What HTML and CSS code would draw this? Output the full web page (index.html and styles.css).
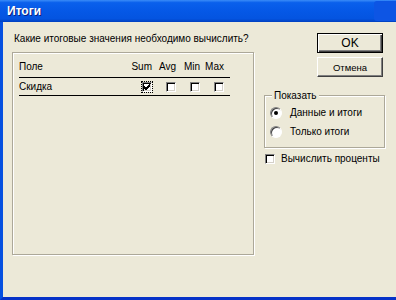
FILE: index.html
```html
<!DOCTYPE html>
<html lang="ru">
  <head>
    <meta charset="UTF-8" />
    <title>Итоги</title>
    <link rel="stylesheet" href="styles.css">
  </head>
  <body>
    <div class="window">
      <div class="titlebar">
        <span class="title">Итоги</span>
        <span class="corner"></span>
      </div>
      <div class="frame">
        <div class="left">
          <div class="prompt">Какие итоговые значения необходимо вычислить?</div>
          <div class="listbox">
            <div class="row head">
              <span>Поле</span>
              <span class="num">Sum</span>
              <span class="num">Avg</span>
              <span class="num">Min</span>
              <span class="num">Max</span>
            </div>
            <div class="row">
              <span>Скидка</span>
              <span class="num"><span class="check focus">
                <svg width="8" height="8" viewBox="0 0 8 8"><path d="M1 3 L3 5 L7 1 M1 4 L3 6 L7 2 M1 5 L3 7 L7 3" stroke="#000" stroke-width="1" fill="none"/></svg>
              </span></span>
              <span class="num"><span class="check"></span></span>
              <span class="num"><span class="check"></span></span>
              <span class="num"><span class="check"></span></span>
            </div>
          </div>
        </div>
        <div class="right">
          <div class="buttons">
            <button class="btn default">OK</button>
            <button class="btn">Отмена</button>
          </div>
          <div class="group">
            <span class="legend">Показать</span>
            <div class="option"><span class="radio on"></span>Данные и итоги</div>
            <div class="option"><span class="radio"></span>Только итоги</div>
          </div>
          <div class="option single"><span class="check"></span>Вычислить проценты</div>
        </div>
      </div>
    </div>
  </body>
</html>
```
FILE: styles.css
```css
body {
  margin: 0;
  overflow: hidden;
  font-family: "Liberation Sans", Arial, sans-serif;
  font-size: 10px;
  color: #000;
  background: #ece9d8;
  white-space: nowrap;
}

.window {
  width: 396px;
  height: 300px;
  display: flex;
  flex-direction: column;
}

/* заголовок окна */
.titlebar {
  height: 22px;
  display: flex;
  align-items: center;
  justify-content: space-between;
  background: linear-gradient(#3a8cf8 0%, #0a60ec 12%, #0558e6 50%, #0454e0 85%, #0040c0 100%);
}

.title {
  color: #fff;
  font-weight: bold;
  font-size: 12px;
  padding-left: 7px;
  text-shadow: 1px 1px #0a1e80;
}

.corner {
  width: 22px;
  height: 20px;
  background: #0d55e4;
  border-radius: 3px 0 0 3px;
}

.frame {
  flex: 1;
  display: flex;
  padding-top: 10px;
  border-left: 3px solid #0650e0;
  border-bottom: 3px solid #0632c8;
}

.left {
  margin-left: 9px;
  width: 242px;
}

.prompt {
  line-height: 13px;
  padding-left: 2px;
  margin-bottom: 7px;
}

.listbox {
  height: 198px;
  border: 1px solid #aca899;
  box-shadow: inset 1px 1px #fff, 1px 1px #fff;
  padding: 3px 0 0 6px;
}

.row {
  width: 206px;
  display: grid;
  grid-template-columns: 1fr 24px 24px 24px 24px;
  align-items: center;
  padding-right: 5px;
  border-bottom: 1px solid #000;
  height: 17px;
}

.row.head {
  height: 21px;
}

.num {
  display: flex;
  justify-content: flex-end;
  padding-right: 1px;
}

.check {
  width: 8px;
  height: 8px;
  background: #fff;
  border: 1px solid;
  border-color: #808080 #fff #fff #808080;
  box-shadow: inset 1px 1px #000, inset -1px -1px #d4d0c8;
  display: inline-flex;
  align-items: center;
  justify-content: center;
  flex: none;
}

.check.focus {
  outline: 1px dotted #000;
  outline-offset: 0;
}

.right {
  margin-left: 10px;
  width: 121px;
  padding-top: 1px;
}

.buttons {
  display: flex;
  flex-direction: column;
  gap: 4px;
  margin-left: 53px;
  width: 66px;
}

.btn {
  height: 20px;
  font-family: "Liberation Sans", Arial, sans-serif;
  font-size: 9.5px;
  color: #000;
  background: #ece9d8;
  border: 1px solid;
  border-color: #fff #404040 #404040 #fff;
  box-shadow: inset -1px -1px #808080;
  padding: 0;
}

.btn.default {
  border-color: #000;
  box-shadow: inset 1px 1px #fff, inset -1px -1px #404040, inset -2px -2px #808080;
  font-size: 12px;
}

.group {
  position: relative;
  margin-top: 18px;
  height: 44px;
  border: 1px solid #aca899;
  box-shadow: inset 1px 1px #fff, 1px 1px #fff;
  padding: 7px 0 0 5px;
}

.legend {
  position: absolute;
  top: -7px;
  left: 7px;
  padding: 0 2px;
  background: #ece9d8;
  line-height: 13px;
}

.option {
  display: flex;
  align-items: center;
  gap: 5px;
  height: 19px;
}

.option.single {
  margin-top: 4px;
  margin-left: 1px;
  height: 13px;
}

.option.single .check {
  margin-right: 1px;
}

.radio {
  width: 10px;
  height: 10px;
  border-radius: 50%;
  background: #fff;
  border: 1px solid;
  border-color: #808080 #fff #fff #808080;
  box-shadow: inset 1px 1px #404040;
  display: inline-flex;
  align-items: center;
  justify-content: center;
  margin-right: 3px;
}

.radio.on::after {
  content: "";
  width: 4px;
  height: 4px;
  border-radius: 50%;
  background: #000;
}
```
